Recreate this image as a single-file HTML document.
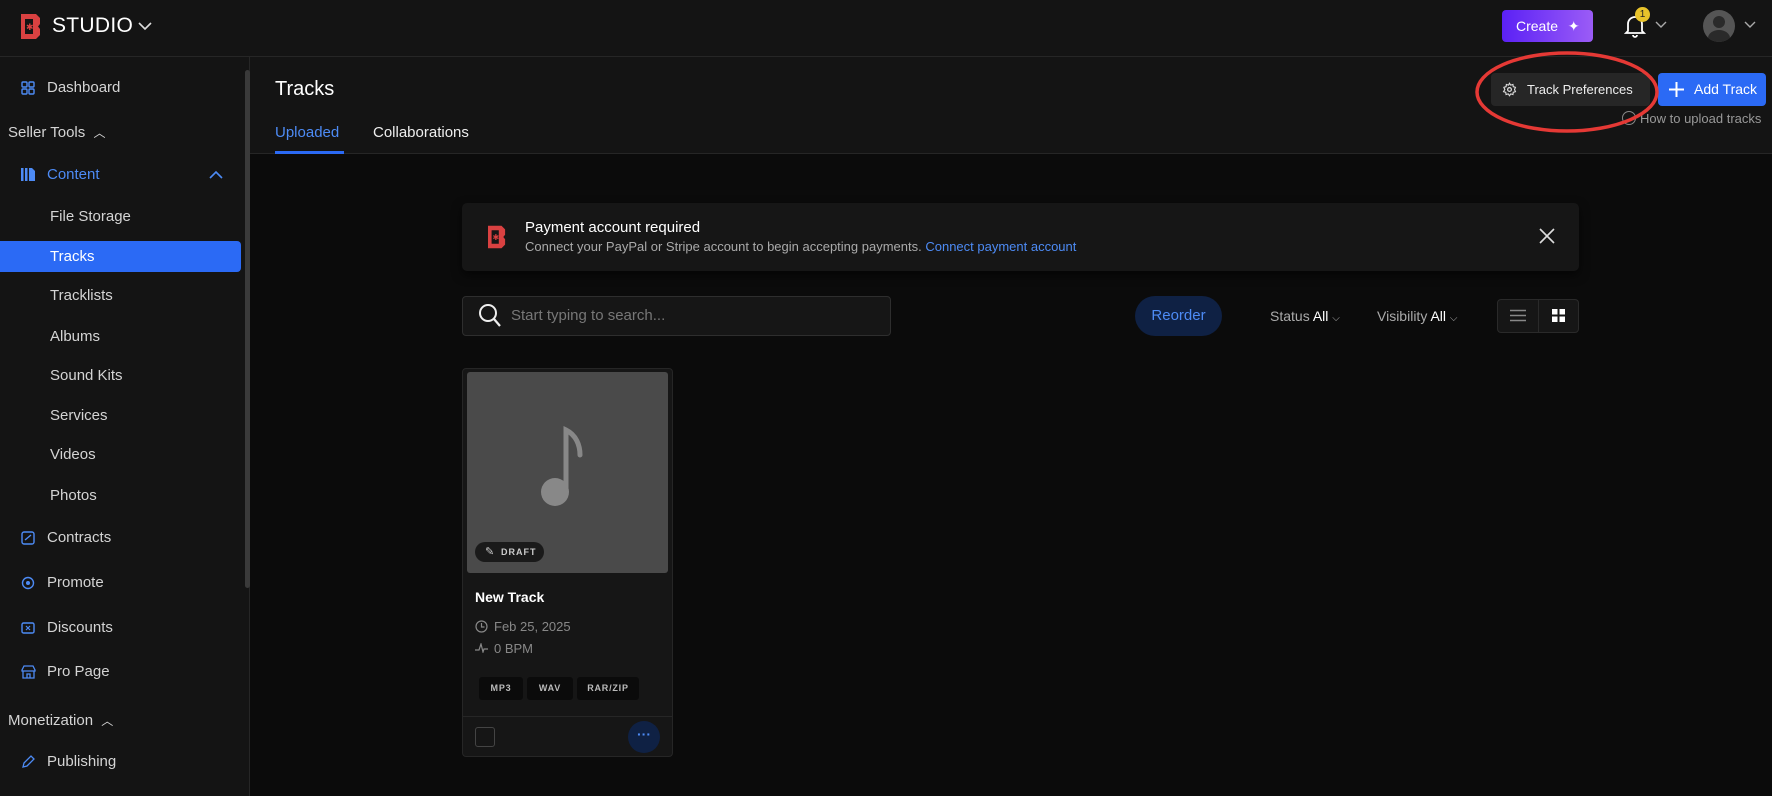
<!DOCTYPE html>
<html><head><meta charset="utf-8"><style>
*{box-sizing:border-box;margin:0;padding:0}
body{width:1772px;height:796px;overflow:hidden;background:#0b0b0b;font-family:"Liberation Sans",sans-serif;color:#fff;position:relative}
.a{position:absolute}
.hdr{left:0;top:0;width:1772px;height:57px;background:#141414;border-bottom:1px solid #262626}
.side{left:0;top:57px;width:250px;height:739px;background:#141414;border-right:1px solid #262626}
.it{position:absolute;font-size:15px;color:#d4d4d4;white-space:nowrap}
.mh{left:250px;top:57px;width:1522px;height:97px;background:#141414;border-bottom:1px solid #262626}
.tag{position:absolute;top:677px;height:23px;background:#0b0b0b;border-radius:3px;font-size:9px;color:#bbb;letter-spacing:.8px;font-weight:bold;text-align:center;line-height:23px}
</style></head><body>
<div class="a hdr"></div>
<svg class="a" style="left:21px;top:14px" width="20" height="25" viewBox="0 0 20 25"><path d="M0 0h15l4 4v6l-2 2.5 2 2.5v6l-4 4H0z" fill="#d94141"/><rect x="4" y="5" width="8" height="15" fill="#141414"/><text x="5" y="16" font-size="9" fill="#d94141">✱</text></svg>
<div class="a" style="left:52px;top:14px;font-size:21px;letter-spacing:.3px">STUDIO</div>
<svg class="a" style="left:138px;top:21px" width="14" height="10"><path d="M1 2l6 6 6-6" stroke="#ddd" stroke-width="1.6" fill="none"/></svg>
<div class="a" style="left:1502px;top:10px;width:91px;height:32px;border-radius:4px;background:linear-gradient(90deg,#5b21f5,#9b5cf6);font-size:14px;line-height:32px;padding-left:14px">Create <span style="margin-left:6px">✦</span></div>
<svg class="a" style="left:1624px;top:14px" width="22" height="24" viewBox="0 0 22 24"><path d="M4 17V10a7 7 0 0 1 14 0v7l2 2H2z M9 21a2 2 0 0 0 4 0" stroke="#fff" stroke-width="1.8" fill="none"/></svg>
<div class="a" style="left:1635px;top:7px;width:15px;height:15px;border-radius:50%;background:#e8c32b;color:#222;font-size:10px;text-align:center;line-height:15px">1</div>
<svg class="a" style="left:1655px;top:21px" width="12" height="8"><path d="M1 1l5 5 5-5" stroke="#aaa" stroke-width="1.4" fill="none"/></svg>
<div class="a" style="left:1703px;top:10px;width:32px;height:32px;border-radius:50%;background:#555;overflow:hidden"><div class="a" style="left:10px;top:6px;width:12px;height:12px;border-radius:50%;background:#2a2a2a"></div><div class="a" style="left:5px;top:20px;width:22px;height:16px;border-radius:50%;background:#2a2a2a"></div></div>
<svg class="a" style="left:1744px;top:21px" width="12" height="8"><path d="M1 1l5 5 5-5" stroke="#aaa" stroke-width="1.4" fill="none"/></svg>

<div class="a side"></div>
<div class="a" style="left:245px;top:70px;width:5px;height:518px;background:#3a3a3a;border-radius:3px"></div>
<svg class="a" style="left:21px;top:81px" width="14" height="14"><g stroke="#4d8bf5" stroke-width="1.4" fill="none"><rect x="1" y="1" width="5" height="5" rx="1"/><rect x="8" y="1" width="5" height="5" rx="1"/><rect x="1" y="8" width="5" height="5" rx="1"/><rect x="8" y="8" width="5" height="5" rx="1"/></g></svg>
<div class="it" style="left:47px;top:79px">Dashboard</div>
<div class="it" style="left:8px;top:124px">Seller Tools <span style="font-size:12px;margin-left:4px">︿</span></div>
<svg class="a" style="left:21px;top:168px" width="14" height="13"><rect x="0" y="0" width="2.5" height="13" fill="#4d8bf5"/><rect x="4" y="0" width="2.5" height="13" fill="#4d8bf5"/><path d="M8 0h3l3 3v10H8z" fill="#4d8bf5"/></svg>
<div class="it" style="left:47px;top:166px;color:#4d8bf5">Content</div>
<svg class="a" style="left:209px;top:170px" width="14" height="9"><path d="M1 8l6-6 6 6" stroke="#4d8bf5" stroke-width="1.6" fill="none"/></svg>
<div class="it" style="left:50px;top:208px">File Storage</div>
<div class="a" style="left:0;top:241px;width:241px;height:31px;background:#2b6af5;border-radius:0 4px 4px 0"></div>
<div class="it" style="left:50px;top:248px;color:#fff">Tracks</div>
<div class="it" style="left:50px;top:287px">Tracklists</div>
<div class="it" style="left:50px;top:328px">Albums</div>
<div class="it" style="left:50px;top:367px">Sound Kits</div>
<div class="it" style="left:50px;top:407px">Services</div>
<div class="it" style="left:50px;top:446px">Videos</div>
<div class="it" style="left:50px;top:487px">Photos</div>
<svg class="a" style="left:21px;top:531px" width="14" height="14"><rect x="1" y="1" width="12" height="12" rx="2" stroke="#4d8bf5" stroke-width="1.4" fill="none"/><path d="M4 9l6-5" stroke="#4d8bf5" stroke-width="1.4"/></svg>
<div class="it" style="left:47px;top:529px">Contracts</div>
<svg class="a" style="left:21px;top:576px" width="14" height="14"><circle cx="7" cy="7" r="5.5" stroke="#4d8bf5" stroke-width="1.4" fill="none"/><circle cx="7" cy="7" r="2" fill="#4d8bf5"/></svg>
<div class="it" style="left:47px;top:574px">Promote</div>
<svg class="a" style="left:21px;top:621px" width="14" height="14"><rect x="1" y="2" width="12" height="10" rx="1.5" stroke="#4d8bf5" stroke-width="1.4" fill="none"/><path d="M5 5l4 4M9 5l-4 4" stroke="#4d8bf5" stroke-width="1.2"/></svg>
<div class="it" style="left:47px;top:619px">Discounts</div>
<svg class="a" style="left:21px;top:665px" width="15" height="14"><path d="M1 5l2-4h9l2 4v1H1zM2 6v7h11V6M6 13V9h3v4" stroke="#4d8bf5" stroke-width="1.3" fill="none"/></svg>
<div class="it" style="left:47px;top:663px">Pro Page</div>
<div class="it" style="left:8px;top:712px">Monetization <span style="font-size:12px;margin-left:4px">︿</span></div>
<svg class="a" style="left:21px;top:755px" width="14" height="14"><path d="M2 12l1-4 7-7 3 3-7 7z" stroke="#4d8bf5" stroke-width="1.3" fill="none"/></svg>
<div class="it" style="left:47px;top:753px">Publishing</div>

<div class="a mh"></div>
<div class="a" style="left:275px;top:78px;font-size:20px">Tracks</div>
<div class="a" style="left:275px;top:124px;font-size:15px;color:#4d8bf5">Uploaded</div>
<div class="a" style="left:275px;top:151px;width:69px;height:3px;background:#2b6af5"></div>
<div class="a" style="left:373px;top:124px;font-size:15px;color:#eee">Collaborations</div>
<div class="a" style="left:1491px;top:73px;width:159px;height:33px;background:#262626;border-radius:4px;font-size:13px;line-height:33px;padding-left:36px;color:#eee">Track Preferences</div>
<svg class="a" style="left:1502px;top:82px" width="15" height="15" viewBox="0 0 24 24"><circle cx="12" cy="12" r="3" stroke="#ddd" stroke-width="2" fill="none"/><path d="M12 2l2 3 3.5-1 .5 3.5 3.5 1-1.5 3.5 1.5 3.5-3.5 1-.5 3.5-3.5-1-2 3-2-3-3.5 1-.5-3.5-3.5-1L4.5 12 3 8.5l3.5-1L7 4l3.5 1z" stroke="#ddd" stroke-width="1.8" fill="none"/></svg>
<div class="a" style="left:1658px;top:73px;width:108px;height:33px;background:#2b6af5;border-radius:4px;font-size:14px;line-height:33px;padding-left:36px">Add Track</div>
<svg class="a" style="left:1668px;top:81px" width="17" height="17"><path d="M8.5 1v15M1 8.5h15" stroke="#fff" stroke-width="2"/></svg>
<div class="a" style="left:1622px;top:111px;width:14px;height:14px;border:1.5px solid #888;border-radius:50%"></div>
<div class="a" style="left:1640px;top:111px;font-size:13px;color:#999">How to upload tracks</div>
<svg class="a" style="left:1474px;top:49px" width="186" height="86"><ellipse cx="93" cy="43" rx="90" ry="39" stroke="#e53935" stroke-width="3.5" fill="none"/></svg>

<div class="a" style="left:462px;top:203px;width:1117px;height:68px;background:#161616;border-radius:5px;box-shadow:0 4px 10px rgba(0,0,0,.6)"></div>
<svg class="a" style="left:488px;top:225px" width="18" height="24" viewBox="0 0 20 25"><path d="M0 0h15l4 4v6l-2 2.5 2 2.5v6l-4 4H0z" fill="#d94141"/><rect x="4" y="5" width="8" height="15" fill="#161616"/><text x="5" y="16" font-size="9" fill="#d94141">✱</text></svg>
<div class="a" style="left:525px;top:219px;font-size:15px">Payment account required</div>
<div class="a" style="left:525px;top:239px;font-size:13px;color:#aaa">Connect your PayPal or Stripe account to begin accepting payments. <span style="color:#4d8bf5">Connect payment account</span></div>
<svg class="a" style="left:1539px;top:228px" width="16" height="16"><path d="M1 1l14 14M15 1L1 15" stroke="#ddd" stroke-width="1.6"/></svg>

<div class="a" style="left:462px;top:296px;width:429px;height:40px;background:#161616;border:1px solid #2e2e2e;border-radius:4px"></div>
<svg class="a" style="left:478px;top:303px" width="24" height="26"><circle cx="10" cy="10" r="8" stroke="#eee" stroke-width="2" fill="none"/><path d="M16 16l6 7" stroke="#eee" stroke-width="2.2"/></svg>
<div class="a" style="left:511px;top:307px;font-size:15px;color:#777">Start typing to search...</div>
<div class="a" style="left:1135px;top:296px;width:87px;height:40px;background:#0f2144;border-radius:20px;color:#4d8bf5;font-size:15px;text-align:center;line-height:40px">Reorder</div>
<div class="a" style="left:1270px;top:308px;font-size:14px;color:#aaa">Status <span style="color:#fff">All</span> <span style="font-size:10px">⌵</span></div>
<div class="a" style="left:1377px;top:308px;font-size:14px;color:#aaa">Visibility <span style="color:#fff">All</span> <span style="font-size:10px">⌵</span></div>
<div class="a" style="left:1497px;top:299px;width:82px;height:34px;background:#161616;border:1px solid #2a2a2a;border-radius:4px"></div>
<div class="a" style="left:1538px;top:299px;width:1px;height:34px;background:#2a2a2a"></div>
<svg class="a" style="left:1510px;top:309px" width="16" height="13"><path d="M0 1.5h16M0 6.5h16M0 11.5h16" stroke="#888" stroke-width="1.5"/></svg>
<svg class="a" style="left:1552px;top:309px" width="13" height="13"><rect x="0" y="0" width="5.5" height="5.5" fill="#fff"/><rect x="7.5" y="0" width="5.5" height="5.5" fill="#fff"/><rect x="0" y="7.5" width="5.5" height="5.5" fill="#fff"/><rect x="7.5" y="7.5" width="5.5" height="5.5" fill="#fff"/></svg>

<div class="a" style="left:462px;top:368px;width:211px;height:389px;background:#161616;border:1px solid #262626;border-radius:4px"></div>
<div class="a" style="left:467px;top:372px;width:201px;height:201px;background:#4a4a4a;border-radius:3px"></div>
<svg class="a" style="left:540px;top:425px" width="52" height="95"><circle cx="15" cy="67" r="14" fill="#888"/><path d="M26 67V5c10 5 14 15 14 25" stroke="#888" stroke-width="5" fill="none" stroke-linecap="round"/></svg>
<div class="a" style="left:475px;top:542px;width:69px;height:20px;background:#1a1a1a;border-radius:10px;font-size:9px;color:#ccc;letter-spacing:1px;line-height:20px;padding-left:26px;font-weight:bold">DRAFT</div>
<div class="a" style="left:485px;top:545px;font-size:11px;color:#ccc">✎</div>
<div class="a" style="left:475px;top:589px;font-size:14px;font-weight:bold">New Track</div>
<svg class="a" style="left:475px;top:620px" width="13" height="13"><circle cx="6.5" cy="6.5" r="5.5" stroke="#888" stroke-width="1.2" fill="none"/><path d="M6.5 3v4h3" stroke="#888" stroke-width="1.2" fill="none"/></svg>
<div class="a" style="left:494px;top:619px;font-size:13px;color:#888">Feb 25, 2025</div>
<svg class="a" style="left:475px;top:643px" width="13" height="10"><path d="M0 7h4l2-6 2 8 1-3h4" stroke="#888" stroke-width="1.2" fill="none"/></svg>
<div class="a" style="left:494px;top:641px;font-size:13px;color:#888">0 BPM</div>
<div class="tag" style="left:479px;width:44px">MP3</div>
<div class="tag" style="left:527px;width:46px">WAV</div>
<div class="tag" style="left:577px;width:62px">RAR/ZIP</div>
<div class="a" style="left:463px;top:716px;width:209px;height:1px;background:#262626"></div>
<div class="a" style="left:475px;top:727px;width:20px;height:20px;border:1px solid #444;border-radius:3px"></div>
<div class="a" style="left:628px;top:721px;width:32px;height:32px;border-radius:50%;background:#0f2144;color:#4d8bf5;text-align:center;line-height:26px;font-size:14px;font-weight:bold">···</div>
</body></html>
